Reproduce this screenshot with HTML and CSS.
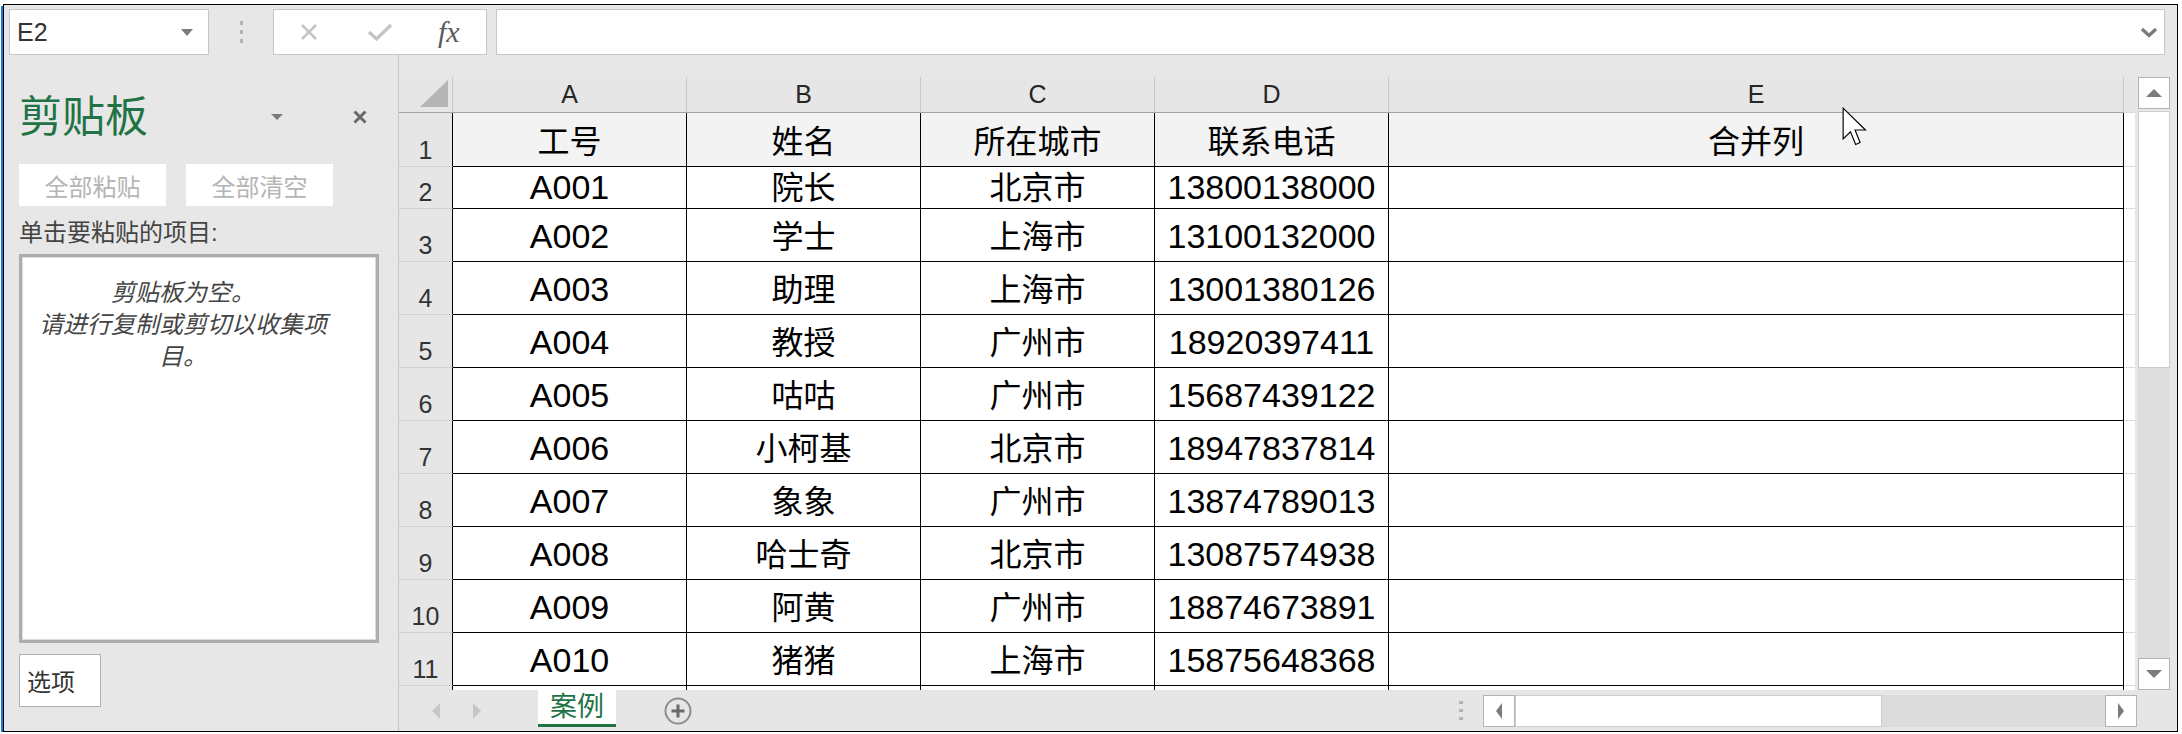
FILE: index.html
```html
<!DOCTYPE html>
<html lang="zh-CN">
<head>
    <meta charset="UTF-8">
    <title>剪贴板 - 案例</title>
    <link rel="stylesheet" href="styles.css">
</head>
<body>

<div class="window">
    <!-- Name box and formula bar -->
    <div class="formula-bar">
        <div class="name-box"><span>E2</span><i class="drop"></i></div>
        <div class="grip"><i></i><i></i><i></i></div>
        <div class="fx-box">
            <svg class="fx-cancel" width="18" height="18" viewBox="0 0 18 18"><path d="M2 2L16 16M16 2L2 16" stroke="#c4c4c4" stroke-width="2.6" fill="none"/></svg>
            <svg class="fx-enter" width="26" height="20" viewBox="0 0 26 20"><path d="M2 10L9.5 17L24 3" stroke="#c4c4c4" stroke-width="3.4" fill="none"/></svg>
            <span class="fx-label">fx</span>
        </div>
        <div class="formula-input">
            <svg class="expand" width="18" height="12" viewBox="0 0 18 12"><path d="M2 3L9 9.5L16 3" stroke="#7a7a7a" stroke-width="3.2" fill="none"/></svg>
        </div>
    </div>

    <div class="main">
        <!-- Clipboard task pane -->
        <aside class="clip-pane">
            <div class="pane-head">
                <span class="pane-title">剪贴板</span>
                <i class="pane-menu"></i>
                <svg class="pane-close" width="14" height="14" viewBox="0 0 14 14"><path d="M1.5 1.5L12.5 12.5M12.5 1.5L1.5 12.5" stroke="#6b6b6b" stroke-width="3" fill="none"/></svg>
            </div>
            <div class="pane-buttons">
                <button>全部粘贴</button>
                <button>全部清空</button>
            </div>
            <div class="pane-label">单击要粘贴的项目:</div>
            <div class="clip-list">
                <p>剪贴板为空。<br>请进行复制或剪切以收集项目。</p>
            </div>
            <button class="options-btn">选项</button>
        </aside>

        <!-- Worksheet -->
        <section class="sheet">
            <div class="sheet-body">
                <div class="grid">
                    <div class="row hdr">
                        <div class="rh corner"><span></span></div>
                        <div class="cell">A</div><div class="cell">B</div><div class="cell">C</div><div class="cell">D</div><div class="cell e">E</div><div class="cell f"></div>
                    </div>
                    <div class="row r1 title-row">
                        <div class="rh">1</div>
                        <div class="cell zh">工号</div><div class="cell zh">姓名</div><div class="cell zh">所在城市</div><div class="cell zh">联系电话</div><div class="cell e zh">合并列</div><div class="cell f"></div>
                    </div>
                    <div class="row r2">
                        <div class="rh">2</div>
                        <div class="cell">A001</div><div class="cell zh">院长</div><div class="cell zh">北京市</div><div class="cell">13800138000</div><div class="cell e"></div><div class="cell f"></div>
                    </div>
                    <div class="row">
                        <div class="rh">3</div>
                        <div class="cell">A002</div><div class="cell zh">学士</div><div class="cell zh">上海市</div><div class="cell">13100132000</div><div class="cell e"></div><div class="cell f"></div>
                    </div>
                    <div class="row">
                        <div class="rh">4</div>
                        <div class="cell">A003</div><div class="cell zh">助理</div><div class="cell zh">上海市</div><div class="cell">13001380126</div><div class="cell e"></div><div class="cell f"></div>
                    </div>
                    <div class="row">
                        <div class="rh">5</div>
                        <div class="cell">A004</div><div class="cell zh">教授</div><div class="cell zh">广州市</div><div class="cell">18920397411</div><div class="cell e"></div><div class="cell f"></div>
                    </div>
                    <div class="row">
                        <div class="rh">6</div>
                        <div class="cell">A005</div><div class="cell zh">咕咕</div><div class="cell zh">广州市</div><div class="cell">15687439122</div><div class="cell e"></div><div class="cell f"></div>
                    </div>
                    <div class="row">
                        <div class="rh">7</div>
                        <div class="cell">A006</div><div class="cell zh">小柯基</div><div class="cell zh">北京市</div><div class="cell">18947837814</div><div class="cell e"></div><div class="cell f"></div>
                    </div>
                    <div class="row">
                        <div class="rh">8</div>
                        <div class="cell">A007</div><div class="cell zh">象象</div><div class="cell zh">广州市</div><div class="cell">13874789013</div><div class="cell e"></div><div class="cell f"></div>
                    </div>
                    <div class="row">
                        <div class="rh">9</div>
                        <div class="cell">A008</div><div class="cell zh">哈士奇</div><div class="cell zh">北京市</div><div class="cell">13087574938</div><div class="cell e"></div><div class="cell f"></div>
                    </div>
                    <div class="row">
                        <div class="rh">10</div>
                        <div class="cell">A009</div><div class="cell zh">阿黄</div><div class="cell zh">广州市</div><div class="cell">18874673891</div><div class="cell e"></div><div class="cell f"></div>
                    </div>
                    <div class="row">
                        <div class="rh">11</div>
                        <div class="cell">A010</div><div class="cell zh">猪猪</div><div class="cell zh">上海市</div><div class="cell">15875648368</div><div class="cell e"></div><div class="cell f"></div>
                    </div>
                    <!-- row 12 only peeks out under row 11 -->
                    <div class="row">
                        <div class="rh"></div>
                        <div class="cell"></div><div class="cell"></div><div class="cell"></div><div class="cell"></div><div class="cell e"></div><div class="cell f"></div>
                    </div>
                </div>
                <div class="vscroll">
                    <div class="vbtn"><i class="tri-up"></i></div>
                    <div class="vthumb"></div>
                    <div class="vtrack"></div>
                    <div class="vbtn"><i class="tri-down"></i></div>
                </div>
            </div>

            <!-- Sheet tabs and horizontal scroll -->
            <div class="tabbar">
                <i class="nav-l"></i>
                <i class="nav-r"></i>
                <div class="sheet-tab">案例</div>
                <svg class="add-sheet" width="28" height="28" viewBox="0 0 28 28"><circle cx="14" cy="14" r="12.5" fill="none" stroke="#8c8c8c" stroke-width="2"/><path d="M14 7.5V20.5M7.5 14H20.5" stroke="#6a6a6a" stroke-width="3"/></svg>
                <div class="hgrip"><i></i><i></i><i></i></div>
                <div class="hscroll">
                    <div class="hbtn"><i class="tri-left"></i></div>
                    <div class="hthumb"></div>
                    <div class="htrack"></div>
                    <div class="hbtn"><i class="tri-right"></i></div>
                </div>
            </div>

            <!-- mouse pointer over column E -->
            <svg class="cursor" width="25" height="39" viewBox="0 0 13 20" preserveAspectRatio="none"><path d="M0.6 0.6V16.4L4.4 12.7L7.1 19.2L9.4 18.2L6.8 11.8H12.2Z" fill="#fff" stroke="#000" stroke-width="0.6"/></svg>
        </section>
    </div>
</div>

</body>
</html>
```

FILE: styles.css
```css
body {
    margin: 0;
    background: #fff;
    overflow: hidden;
    font-family: "Liberation Sans", "Noto Sans CJK SC", sans-serif;
}
.window {
    box-sizing: border-box;
    width: 2175px;
    height: 728px;
    margin: 4px 0 0 3px;
    border: 1px solid #000;
    box-shadow: -2px 2px 0 #1c76d3; /* desktop blue peeking out */
    background: #e7e7e7;
    display: flex;
    flex-direction: column;
}

/* ---- formula bar ---- */
.formula-bar {
    display: flex;
    flex-shrink: 0;
    height: 46px;
    margin-top: 4px;
    padding-left: 5px;
}
.name-box {
    box-sizing: border-box;
    width: 200px;
    background: #fff;
    border: 1px solid #c6c6c6;
    display: flex;
    align-items: center;
    padding-left: 7px;
    font-size: 25px;
    color: #333;
}
.drop {
    margin-left: auto;
    margin-right: 15px;
    border-left: 6px solid transparent;
    border-right: 6px solid transparent;
    border-top: 7px solid #7b7b7b;
}
.grip {
    width: 64px;
    display: flex;
    flex-direction: column;
    align-items: center;
    justify-content: center;
    gap: 5px;
}
.grip i {
    width: 3px;
    height: 4px;
    background: #b4b4b4;
}
.fx-box {
    box-sizing: border-box;
    width: 214px;
    background: #fff;
    border: 1px solid #c6c6c6;
    display: flex;
    align-items: center;
}
.fx-cancel {
    margin-left: 26px;
}
.fx-enter {
    margin-left: 49px;
}
.fx-label {
    margin-left: 45px;
    font-family: "Liberation Serif", serif;
    font-style: italic;
    font-size: 30px;
    color: #5c5c5c;
}
.formula-input {
    box-sizing: border-box;
    flex: 1;
    margin: 0 12px 0 9px;
    background: #fff;
    border: 1px solid #c6c6c6;
    display: flex;
    align-items: center;
    justify-content: flex-end;
}
.expand {
    margin-right: 6px;
}

/* ---- main area ---- */
.main {
    flex: 1;
    display: flex;
    min-height: 0;
}
.clip-pane {
    box-sizing: border-box;
    width: 395px;
    border-right: 1px solid #c6c6c6;
    padding-left: 15px;
}
.pane-head {
    display: flex;
    align-items: center;
    height: 44px;
    margin-top: 40px;
    padding-right: 31px;
}
.pane-title {
    font-size: 43px;
    line-height: 44px;
    color: #217346; /* excel green */
}
.pane-menu {
    margin-left: auto;
    margin-right: 70px;
    border-left: 6px solid transparent;
    border-right: 6px solid transparent;
    border-top: 6px solid #7a7a7a;
}
.pane-buttons {
    display: flex;
    gap: 20px;
    margin-top: 25px;
}
.pane-buttons button {
    box-sizing: border-box;
    width: 147px;
    height: 42px;
    padding: 0;
    border: none;
    background: #fff;
    font: 24px "Liberation Sans", "Noto Sans CJK SC", sans-serif;
    color: #b5b5b5;
}
.pane-label {
    margin-top: 15px;
    font-size: 24px;
    line-height: 24px;
    color: #444;
}
.clip-list {
    box-sizing: border-box;
    width: 360px;
    height: 389px;
    margin-top: 9px;
    padding: 20px 48px 0 16px;
    background: #fff;
    border: 3px solid #adadad;
    box-shadow: inset 0 0 0 1px #dcdcdc;
}
.clip-list p {
    margin: 0;
    font-size: 24px;
    line-height: 32px;
    font-style: italic;
    text-align: center;
    color: #444;
}
.options-btn {
    display: block;
    box-sizing: border-box;
    width: 82px;
    height: 53px;
    margin-top: 11px;
    padding: 0 0 0 7px;
    background: #fff;
    border: 1px solid #b0b0b0;
    text-align: left;
    font: 24px "Liberation Sans", "Noto Sans CJK SC", sans-serif;
    color: #333;
}

/* ---- worksheet ---- */
.sheet {
    flex: 1;
    min-width: 0;
    position: relative;
    display: flex;
    flex-direction: column;
    padding-top: 22px;
}
.sheet-body {
    display: flex;
    height: 613px;
}
.grid {
    width: 1736px;
    overflow: hidden;
    background: #fff;
}
.row {
    display: flex;
    height: 53px;
}
.row.hdr { height: 36px; }
.row.r1 { height: 54px; }
.row.r2 { height: 42px; }
.row > div {
    box-sizing: border-box;
    flex-shrink: 0;
    display: flex;
    justify-content: center;
    align-items: flex-end;
    line-height: 1;
    white-space: nowrap;
}
.rh {
    width: 54px;
    padding-bottom: 3px;
    background: #e6e6e6;
    border-right: 1px solid #000;
    border-bottom: 1px solid #d2d2d2;
    font-size: 25px;
    color: #333;
}
.cell {
    width: 234px;
    padding-bottom: 8px;
    border-right: 1px solid #000;
    border-bottom: 1px solid #000;
    font-size: 34px;
    color: #000;
}
.cell.zh { font-size: 32px; }
.cell.e { width: 735px; }
.cell.f {
    width: 100px;
    border-right-color: #d9d9d9;
    border-bottom-color: #d9d9d9;
}
.r2 .cell { padding-bottom: 4px; }
.title-row .cell { background: #f3f3f3; }
.title-row .cell.f { background: #fff; }

/* column letters */
.hdr > div {
    align-items: center;
    padding: 0;
    background: #e6e6e6;
    border-right: 1px solid #c8c8c8;
    border-bottom: 1px solid #a3a3a3;
    font-size: 25px;
    color: #262626;
}
.hdr > .corner {
    justify-content: flex-end;
    align-items: flex-end;
    padding: 0 4px 5px 0;
}
.corner span {
    width: 28px;
    height: 27px;
    background: #b5b5b5;
    clip-path: polygon(100% 0, 100% 100%, 0 100%);
}

/* vertical scrollbar */
.vscroll {
    width: 32px;
    margin-left: 3px;
    display: flex;
    flex-direction: column;
}
.vbtn {
    box-sizing: border-box;
    height: 32px;
    flex-shrink: 0;
    background: #fff;
    border: 1px solid #b3b3b3;
    display: flex;
    align-items: center;
    justify-content: center;
}
.vthumb {
    box-sizing: border-box;
    height: 257px;
    margin-top: 2px;
    background: #fff;
    border: 1px solid #cdcdcd;
}
.vtrack {
    flex: 1;
    background: #dedede;
}
.tri-up {
    border-left: 8px solid transparent;
    border-right: 8px solid transparent;
    border-bottom: 8px solid #7b7b7b;
}
.tri-down {
    border-left: 8px solid transparent;
    border-right: 8px solid transparent;
    border-top: 8px solid #7b7b7b;
}
.tri-left {
    border-top: 8px solid transparent;
    border-bottom: 8px solid transparent;
    border-right: 6px solid #7b7b7b;
}
.tri-right {
    border-top: 8px solid transparent;
    border-bottom: 8px solid transparent;
    border-left: 6px solid #7b7b7b;
}

/* sheet tab bar */
.tabbar {
    display: flex;
    align-items: center;
    height: 41px;
    background: #e6e6e6;
}
.nav-l {
    margin-left: 33px;
    border-top: 8px solid transparent;
    border-bottom: 8px solid transparent;
    border-right: 8px solid #c6c6c6;
}
.nav-r {
    margin-left: 33px;
    border-top: 8px solid transparent;
    border-bottom: 8px solid transparent;
    border-left: 8px solid #c6c6c6;
}
.sheet-tab {
    align-self: flex-start;
    box-sizing: border-box;
    width: 78px;
    height: 37px;
    margin-left: 57px;
    background: #fff;
    border-bottom: 3px solid #217346;
    color: #217346;
    font-size: 27px;
    line-height: 34px;
    text-align: center;
}
.add-sheet {
    margin-left: 48px;
}
.hgrip {
    margin-left: 767px;
    display: flex;
    flex-direction: column;
    gap: 5px;
}
.hgrip i {
    width: 4px;
    height: 3px;
    background: #b4b4b4;
}
.hscroll {
    display: flex;
    width: 654px;
    height: 32px;
    margin-left: 20px;
}
.hbtn {
    box-sizing: border-box;
    width: 32px;
    background: #fff;
    border: 1px solid #b3b3b3;
    display: flex;
    align-items: center;
    justify-content: center;
}
.hthumb {
    box-sizing: border-box;
    width: 367px;
    background: #fff;
    border: 1px solid #cdcdcd;
}
.htrack {
    flex: 1;
    background: #dcdcdc;
}

.cursor {
    position: absolute;
    left: 1443px;
    top: 52px;
}
```
